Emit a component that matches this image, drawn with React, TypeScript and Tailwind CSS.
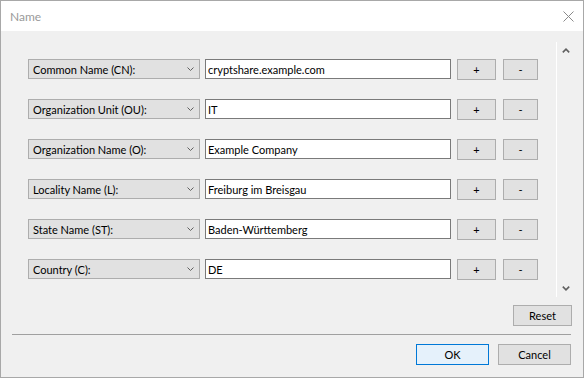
import React from 'react';

const rows = [
  { label: 'Common Name (CN):', value: 'cryptshare.example.com' },
  { label: 'Organization Unit (OU):', value: 'IT' },
  { label: 'Organization Name (O):', value: 'Example Company' },
  { label: 'Locality Name (L):', value: 'Freiburg im Breisgau' },
  { label: 'State Name (ST):', value: 'Baden-Württemberg' },
  { label: 'Country (C):', value: 'DE' },
];

const ChevronDown = ({ className }: { className?: string }) => (
  <svg width="7" height="4" viewBox="0 0 7 4" className={className}>
    <path d="M0.5 0.5 L3.5 3.5 L6.5 0.5" fill="none" stroke="#606060" strokeWidth="1" />
  </svg>
);

const ScrollArrow = ({ up }: { up?: boolean }) => (
  <div className="h-[17px] w-full flex items-center justify-center">
    <svg width="8" height="5" viewBox="0 0 8 5">
      <path
        d={up ? 'M0.8 4.4 L4 1.2 L7.2 4.4' : 'M0.8 0.6 L4 3.8 L7.2 0.6'}
        fill="none"
        stroke="#606060"
        strokeWidth="1.6"
      />
    </svg>
  </div>
);

const Button = ({ children, className }: { children: React.ReactNode; className?: string }) => (
  <button
    className={
      'h-[21px] flex items-center justify-center border text-black ' +
      (className ?? 'border-[#adadad] bg-[#e1e1e1]')
    }
  >
    {children}
  </button>
);

export default function App() {
  return (
    <div
      className="w-[584px] h-[378px] flex flex-col bg-[#f0f0f0] border border-[#a8a8a8] text-[11px] leading-none"
      style={{ fontFamily: 'Lato, "Segoe UI", sans-serif' }}
    >
      {/* title bar */}
      <div className="h-[30px] shrink-0 bg-white flex items-center justify-between pl-[9px] pr-[9px]">
        <span className="text-[#9a9a9a] text-[12px] pt-[1px]">Name</span>
        <svg width="11" height="11" viewBox="0 0 11 11">
          <path d="M0.5 0.5 L10.5 10.5 M10.5 0.5 L0.5 10.5" stroke="#8a8a8a" strokeWidth="1" />
        </svg>
      </div>

      {/* scroll panel */}
      <div className="h-[266px] shrink-0 flex">
        <div className="flex-1 pt-[28px] pl-[27px] flex flex-col gap-[19px]">
          {rows.map((r) => (
            <div key={r.label} className="h-[21px] flex items-start">
              <div className="w-[172px] h-[20px] border border-[#adadad] bg-[#e1e1e1] flex items-center justify-between pl-[4px] pr-[5px]">
                <span className="text-black">{r.label}</span>
                <ChevronDown />
              </div>
              <div className="ml-[5px] w-[246px] h-[20px] border border-[#7a7a7a] bg-white flex items-center pl-[2px]">
                <span className="text-black">{r.value}</span>
              </div>
              <Button className="ml-[6px] w-[39px] border-[#adadad] bg-[#e1e1e1]">+</Button>
              <Button className="ml-[7px] w-[35px] border-[#adadad] bg-[#e1e1e1]">-</Button>
            </div>
          ))}
        </div>
        <div className="mt-[11px] mr-[9px] w-[18px] border-l border-white flex flex-col justify-between">
          <ScrollArrow up />
          <ScrollArrow />
        </div>
      </div>

      {/* footer */}
      <div className="flex justify-end pr-[11px] mt-[8px]">
        <Button className="w-[59px] border-[#adadad] bg-[#e1e1e1]">Reset</Button>
      </div>
      <div className="mt-[8px] ml-[11px] mr-[12px] h-px bg-[#a0a0a0]" />
      <div className="flex justify-end pr-[12px] mt-[9px] gap-[9px]">
        <Button className="w-[73px] border-[#0078d7] bg-[#e5f1fb]">OK</Button>
        <Button className="w-[73px] border-[#adadad] bg-[#e1e1e1]">Cancel</Button>
      </div>
    </div>
  );
}
